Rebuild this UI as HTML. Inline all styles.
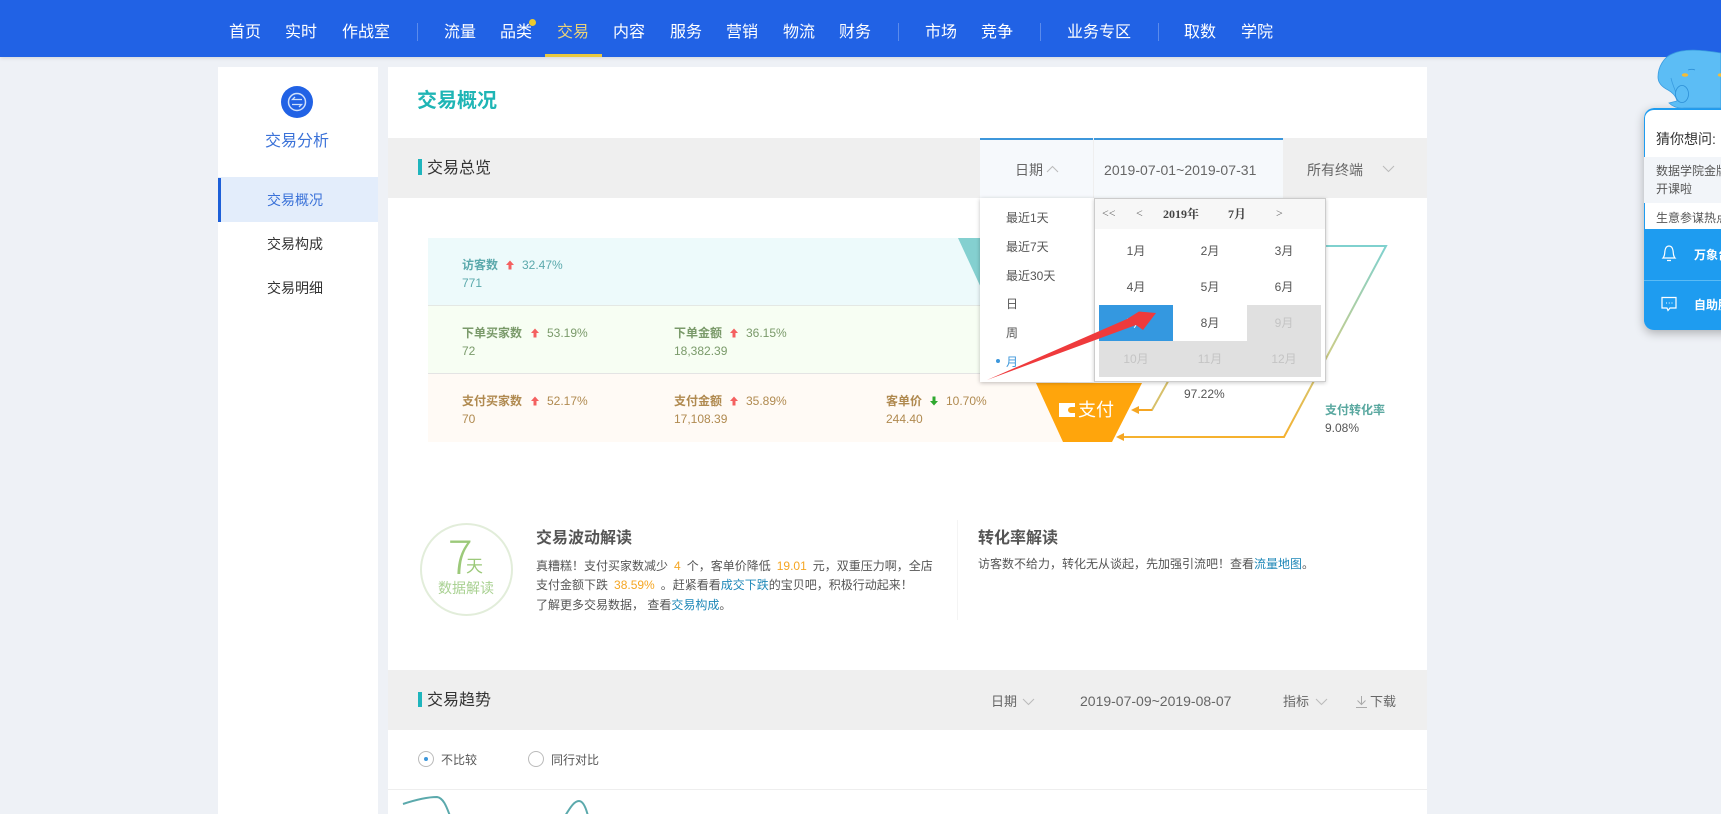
<!DOCTYPE html>
<html lang="zh-CN">
<head>
<meta charset="utf-8">
<title>交易概况</title>
<style>
html,body{margin:0;padding:0;width:1721px;height:814px;overflow:hidden;background:#eef1f6}
body{position:relative;font-family:"Liberation Sans","Noto Sans CJK SC",sans-serif;font-size:12px;color:#555}
.a,.t{position:absolute}
.t{line-height:20px;white-space:nowrap}
.nav{font-size:16px;color:#fff;top:23px}
.div{position:absolute;top:23px;width:1px;height:18px;background:#5b8bec}
.g{color:#666;font-size:14px}
.b{font-weight:bold}
.o{color:#f5a623;margin:0 6px}
.l{color:#1f88b8}
.cell{position:absolute;width:74px;height:36px;line-height:36px;text-align:center;font-size:12px;color:#555}
.off{background:#e0e0e0;color:#c4c4c4}
.r1{color:#5ba9ac}.r2{color:#7a9a6a}.r3{color:#b08a50}
</style>
</head>
<body>

<!-- header -->
<div class="a" style="left:0;top:0;width:1721px;height:57px;background:#2162e5;box-shadow:0 1px 4px rgba(0,0,0,.12)"></div>
<div class="t nav" style="left:229px">首页</div>
<div class="t nav" style="left:285px">实时</div>
<div class="t nav" style="left:342px">作战室</div>
<div class="div" style="left:417px"></div>
<div class="t nav" style="left:444px">流量</div>
<div class="t nav" style="left:500px">品类</div>
<div class="a" style="left:529px;top:19px;width:7px;height:7px;border-radius:50%;background:#ecc92e"></div>
<div class="t nav" style="left:557px;color:#e9d27a">交易</div>
<div class="a" style="left:545px;top:54px;width:57px;height:3px;background:#e8c83f"></div>
<div class="t nav" style="left:613px">内容</div>
<div class="t nav" style="left:670px">服务</div>
<div class="t nav" style="left:726px">营销</div>
<div class="t nav" style="left:783px">物流</div>
<div class="t nav" style="left:839px">财务</div>
<div class="div" style="left:898px"></div>
<div class="t nav" style="left:925px">市场</div>
<div class="t nav" style="left:981px">竞争</div>
<div class="div" style="left:1040px"></div>
<div class="t nav" style="left:1067px">业务专区</div>
<div class="div" style="left:1158px"></div>
<div class="t nav" style="left:1184px">取数</div>
<div class="t nav" style="left:1241px">学院</div>

<!-- sidebar -->
<div class="a" style="left:218px;top:67px;width:160px;height:747px;background:#fff"></div>
<svg class="a" style="left:281px;top:86px" width="32" height="32" viewBox="0 0 32 32">
  <circle cx="16" cy="16" r="16" fill="#2162e5"/>
  <circle cx="16" cy="16" r="8.5" fill="none" stroke="#cfe0fb" stroke-width="1.5"/>
  <path d="M21 13.5H11.5L14 11M11 18.5H20.5L18 21" fill="none" stroke="#cfe0fb" stroke-width="1.3"/>
</svg>
<div class="t" style="left:265px;top:132px;font-size:16px;color:#3b72d8">交易分析</div>
<div class="a" style="left:218px;top:177px;width:160px;height:45px;background:#e3edfb"></div>
<div class="a" style="left:218px;top:178px;width:3px;height:44px;background:#1d5fd8"></div>
<div class="t" style="left:267px;top:190px;font-size:14px;color:#3b72d8">交易概况</div>
<div class="t" style="left:267px;top:234px;font-size:14px;color:#333">交易构成</div>
<div class="t" style="left:267px;top:278px;font-size:14px;color:#333">交易明细</div>

<!-- main -->
<div class="a" style="left:388px;top:67px;width:1039px;height:747px;background:#fff"></div>
<div class="t b" style="left:417px;top:91px;font-size:20px;color:#1fb5b5">交易概况</div>

<div class="a" style="left:388px;top:138px;width:1039px;height:60px;background:#efefef"></div>
<div class="a" style="left:418px;top:159px;width:4px;height:16px;background:#1fb5bd"></div>
<div class="t" style="left:427px;top:159px;font-size:16px;color:#333">交易总览</div>

<!-- funnel rows -->
<div class="a" style="left:428px;top:238px;width:640px;height:67px;background:#edfafb"></div>
<div class="a" style="left:428px;top:305px;width:640px;height:68px;background:#f7fef3;border-top:1px solid #e4e8e4;box-sizing:border-box"></div>
<div class="a" style="left:428px;top:373px;width:640px;height:69px;background:#fffaf5;border-top:1px solid #e4e4e4;box-sizing:border-box"></div>

<svg class="a" style="left:0;top:0" width="1721" height="814" viewBox="0 0 1721 814">
  <defs>
    <linearGradient id="lg" x1="0" y1="0" x2="0" y2="1">
      <stop offset="0" stop-color="#7fd1cf"/>
      <stop offset=".55" stop-color="#c9cd8a"/>
      <stop offset="1" stop-color="#f5b12f"/>
    </linearGradient>
  </defs>
  <polygon points="958,238 1100,238 1060,305 989,305" fill="#84d0d0"/>
  <polygon points="1036,383 1142,383 1112,442 1063,442" fill="#ffa50c"/>
  <polyline points="1300,246 1386,246 1284,437 1124,437" fill="none" stroke="url(#lg)" stroke-width="2"/>
  <path d="M1284,437H1124" stroke="#f5b12f" stroke-width="2"/>
  <polygon points="1116,437 1124,433 1124,441" fill="#f5a623"/>
  <polyline points="1180,360 1152,410 1139,410" fill="none" stroke="#d7c06a" stroke-width="2"/>
  <path d="M1152,410H1139" stroke="#f5a623" stroke-width="2"/>
  <polygon points="1131,410 1139,406 1139,414" fill="#f5a623"/>
  <path d="M1059 403h16v4h-4a3 3 0 0 0 0 6h4v4h-16z" fill="#fff"/>
  <!-- small trend arrows -->
  <g fill="#f46060">
    <path d="M510 260.500L514 265H511.500V269.500H508.500V265H506Z"/>
    <path d="M535 328.500L539 333H536.500V337.500H533.500V333H531Z"/>
    <path d="M734 328.500L738 333H735.500V337.500H732.500V333H730Z"/>
    <path d="M535 396.500L539 401H536.500V405.500H533.500V401H531Z"/>
    <path d="M734 396.500L738 401H735.500V405.500H732.500V401H730Z"/>
  </g>
  <path d="M934 405.500L938 401H935.500V396.500H932.500V401H930Z" fill="#2fa82f"/>
</svg>
<div class="t" style="left:1078px;top:400px;font-size:18px;color:#fff">支付</div>
<div class="t" style="left:1184px;top:384px;color:#555">97.22%</div>
<div class="t b" style="left:1325px;top:400px;color:#5aa8a0">支付转化率</div>
<div class="t" style="left:1325px;top:418px;color:#555">9.08%</div>

<!-- row 1 -->
<div class="t b r1" style="left:462px;top:255px">访客数</div>
<div class="t r1" style="left:522px;top:255px">32.47%</div>
<div class="t r1" style="left:462px;top:273px">771</div>
<!-- row 2 -->
<div class="t b r2" style="left:462px;top:323px">下单买家数</div>
<div class="t r2" style="left:547px;top:323px">53.19%</div>
<div class="t r2" style="left:462px;top:341px">72</div>
<div class="t b r2" style="left:674px;top:323px">下单金额</div>
<div class="t r2" style="left:746px;top:323px">36.15%</div>
<div class="t r2" style="left:674px;top:341px">18,382.39</div>
<!-- row 3 -->
<div class="t b r3" style="left:462px;top:391px">支付买家数</div>
<div class="t r3" style="left:547px;top:391px">52.17%</div>
<div class="t r3" style="left:462px;top:409px">70</div>
<div class="t b r3" style="left:674px;top:391px">支付金额</div>
<div class="t r3" style="left:746px;top:391px">35.89%</div>
<div class="t r3" style="left:674px;top:409px">17,108.39</div>
<div class="t b r3" style="left:886px;top:391px">客单价</div>
<div class="t r3" style="left:946px;top:391px">10.70%</div>
<div class="t r3" style="left:886px;top:409px">244.40</div>

<!-- right tabs -->
<div class="a" style="left:980px;top:138px;width:113px;height:60px;background:#f6f9fc;border-top:2px solid #3d97db;box-sizing:border-box"></div>
<div class="a" style="left:1094px;top:138px;width:189px;height:60px;background:#f6f9fc;border-top:2px solid #3d97db;box-sizing:border-box"></div>
<div class="t g" style="left:1015px;top:160px">日期</div>
<svg class="a" style="left:1046px;top:165px" width="13" height="8"><path d="M1 7L6.500 1.500L12 7" fill="none" stroke="#bbb"/></svg>
<div class="t g" style="left:1104px;top:160px;letter-spacing:.05px">2019-07-01~2019-07-31</div>
<div class="t g" style="left:1307px;top:160px">所有终端</div>
<svg class="a" style="left:1382px;top:165px" width="13" height="8"><path d="M1 1L6.500 6.500L12 1" fill="none" stroke="#bbb"/></svg>

<!-- dropdown -->
<div class="a" style="left:980px;top:198px;width:114px;height:184px;background:#fff;box-shadow:0 1px 4px rgba(0,0,0,.25)"></div>
<div class="t" style="left:1006px;top:208px">最近1天</div>
<div class="t" style="left:1006px;top:237px">最近7天</div>
<div class="t" style="left:1006px;top:266px">最近30天</div>
<div class="t" style="left:1006px;top:294px">日</div>
<div class="t" style="left:1006px;top:323px">周</div>
<div class="t" style="left:1006px;top:352px;color:#3d97db">月</div>
<div class="a" style="left:996px;top:359px;width:4px;height:4px;border-radius:50%;background:#3d97db"></div>

<!-- calendar -->
<div class="a" style="left:1094px;top:198px;width:232px;height:184px;background:#fff;border:1px solid #ccc;box-sizing:border-box;box-shadow:0 1px 4px rgba(0,0,0,.2)"></div>
<div class="a" style="left:1095px;top:199px;width:230px;height:30px;background:#f7f7f7"></div>
<div class="t" style="left:1102px;top:203px;color:#666;font-family:'Liberation Serif','Noto Serif CJK SC',serif">&lt;&lt;</div>
<div class="t" style="left:1136px;top:203px;color:#666;font-family:'Liberation Serif','Noto Serif CJK SC',serif">&lt;</div>
<div class="t b" style="left:1163px;top:204px;color:#444;font-family:'Liberation Serif','Noto Serif CJK SC',serif">2019年</div>
<div class="t b" style="left:1228px;top:204px;color:#444;font-family:'Liberation Serif','Noto Serif CJK SC',serif">7月</div>
<div class="t" style="left:1276px;top:203px;color:#666;font-family:'Liberation Serif','Noto Serif CJK SC',serif">&gt;</div>
<div class="cell" style="left:1099px;top:233px">1月</div>
<div class="cell" style="left:1173px;top:233px">2月</div>
<div class="cell" style="left:1247px;top:233px">3月</div>
<div class="cell" style="left:1099px;top:269px">4月</div>
<div class="cell" style="left:1173px;top:269px">5月</div>
<div class="cell" style="left:1247px;top:269px">6月</div>
<div class="cell" style="left:1099px;top:305px;background:#3498e0;color:#fff">7月</div>
<div class="cell" style="left:1173px;top:305px">8月</div>
<div class="cell off" style="left:1247px;top:305px">9月</div>
<div class="cell off" style="left:1099px;top:341px">10月</div>
<div class="cell off" style="left:1173px;top:341px">11月</div>
<div class="cell off" style="left:1247px;top:341px">12月</div>

<!-- red arrow -->
<svg class="a" style="left:0;top:0" width="1721" height="814" viewBox="0 0 1721 814">
  <polygon points="987,380 1127,319 1139,311.500 1156,313 1143,330 1136,325" fill="#ef3a3c"/>
</svg>

<!-- interpretation -->
<div class="a" style="left:420px;top:523px;width:93px;height:93px;border:2px solid #e2edda;border-radius:50%;box-sizing:border-box"></div>
<div class="t" style="left:448px;top:545px;font-size:46px;color:#9cc97a;font-weight:200;font-family:'Noto Sans CJK SC',sans-serif">7</div>
<div class="t" style="left:466px;top:557px;font-size:17px;color:#9cc97a">天</div>
<div class="t" style="left:438px;top:578px;font-size:14px;color:#a9d192">数据解读</div>

<div class="t b" style="left:536px;top:529px;font-size:16px;color:#555">交易波动解读</div>
<div class="t" style="left:536px;top:556px">真糟糕！支付买家数减少<span class="o">4</span>个，客单价降低<span class="o">19.01</span>元，双重压力啊，全店</div>
<div class="t" style="left:536px;top:575px">支付金额下跌<span class="o">38.59%</span>。赶紧看看<span class="l">成交下跌</span>的宝贝吧，积极行动起来！</div>
<div class="t" style="left:536px;top:595px">了解更多交易数据， 查看<span class="l">交易构成</span>。</div>
<div class="a" style="left:957px;top:520px;width:1px;height:100px;background:#f4f4f4"></div>
<div class="t b" style="left:978px;top:529px;font-size:16px;color:#555">转化率解读</div>
<div class="t" style="left:978px;top:554px">访客数不给力，转化无从谈起，先加强引流吧！查看<span class="l">流量地图</span>。</div>

<!-- trend -->
<div class="a" style="left:388px;top:670px;width:1039px;height:60px;background:#efefef"></div>
<div class="a" style="left:418px;top:692px;width:4px;height:15px;background:#1fb5bd"></div>
<div class="t" style="left:427px;top:691px;font-size:16px;color:#333">交易趋势</div>
<div class="t" style="left:991px;top:692px;font-size:13px;color:#666">日期</div>
<svg class="a" style="left:1022px;top:698px" width="13" height="8"><path d="M1 1L6.500 6.500L12 1" fill="none" stroke="#bbb"/></svg>
<div class="t g" style="left:1080px;top:691px">2019-07-09~2019-08-07</div>
<div class="t" style="left:1283px;top:692px;font-size:13px;color:#666">指标</div>
<svg class="a" style="left:1315px;top:698px" width="13" height="8"><path d="M1 1L6.500 6.500L12 1" fill="none" stroke="#bbb"/></svg>
<svg class="a" style="left:1355px;top:695px" width="13" height="14"><path d="M6.500 1V9M2.500 5.500L6.500 9.500L10.500 5.500M1 12.500H12" fill="none" stroke="#aaa"/></svg>
<div class="t" style="left:1370px;top:692px;font-size:13px;color:#666">下载</div>
<div class="a" style="left:418px;top:751px;width:16px;height:16px;border:1px solid #bbb;border-radius:50%;box-sizing:border-box"></div>
<div class="a" style="left:424px;top:757px;width:4px;height:4px;border-radius:50%;background:#3d97db"></div>
<div class="t" style="left:441px;top:750px">不比较</div>
<div class="a" style="left:528px;top:751px;width:16px;height:16px;border:1px solid #bbb;border-radius:50%;box-sizing:border-box"></div>
<div class="t" style="left:551px;top:750px">同行对比</div>
<div class="a" style="left:388px;top:789px;width:1039px;height:1px;background:#eee"></div>
<svg class="a" style="left:0;top:0" width="1721" height="814" viewBox="0 0 1721 814">
  <path d="M403,804C415,800 428,797 437,797C443,798 446,805 450,816" fill="none" stroke="#5ba9ac" stroke-width="2"/>
  <path d="M565,816C570,808 574,801 579,801C583,801 586,808 588,816" fill="none" stroke="#5ba9ac" stroke-width="2"/>
</svg>

<!-- right widget -->
<div class="a" style="left:1644px;top:108px;width:120px;height:222px;background:#fff;border-radius:10px;overflow:hidden;box-shadow:0 3px 10px rgba(0,0,0,.28)">
  <div class="a" style="left:0;top:0;width:120px;height:222px;border-top:2px solid #1e9cf0;border-left:1px solid #1e9cf0;border-radius:10px;box-sizing:border-box"></div>
  <div class="t" style="left:12px;top:21px;font-size:14px;color:#333">猜你想问:</div>
  <div class="a" style="left:0;top:49px;width:120px;height:46px;background:#f2f5f9"></div>
  <div class="t" style="left:12px;top:53px;color:#555">数据学院金牌</div>
  <div class="t" style="left:12px;top:71px;color:#555">开课啦</div>
  <div class="t" style="left:12px;top:100px;color:#555">生意参谋热点</div>
  <div class="a" style="left:0;top:121px;width:120px;height:101px;background:#1e9cf0"></div>
  <div class="a" style="left:0;top:172px;width:120px;height:1px;background:#5abbf5"></div>
  <div class="t b" style="left:50px;top:137px;color:#fff">万象台</div>
  <div class="t b" style="left:50px;top:187px;color:#fff">自助服务</div>
</div>
<svg class="a" style="left:1661px;top:244px" width="16" height="18" viewBox="0 0 16 18"><path d="M2 14C4 12 3.500 9 4 6.500C4.500 3.500 6 2 8 2C10 2 11.500 3.500 12 6.500C12.500 9 12 12 14 14ZM6 16.500H10" fill="none" stroke="#fff" stroke-width="1.200"/></svg>
<svg class="a" style="left:1661px;top:296px" width="16" height="16" viewBox="0 0 16 16"><path d="M1 1.500H15V12H9L7 14.500L6 12H1Z" fill="none" stroke="#fff" stroke-width="1.200"/><path d="M5 7H5.800M7.800 7H8.600M10.600 7H11.400" stroke="#fff" stroke-width="1.200"/></svg>

<!-- mascot -->
<svg class="a" style="left:1650px;top:45px" width="71" height="70" viewBox="0 0 71 70">
  <path d="M8 32C8 22 14 12 22 9C34 3 52 5 71 8V63H34C28 64 22 61 19 58L27 56C26 51 22 47 18 45C12 42 8 38 8 32Z" fill="#5cbdf5" stroke="#3a9ce0" stroke-width=".8"/>
  <path d="M21 33C22 38 24 42 26 48" fill="none" stroke="#3a9ce0" stroke-width=".8"/>
  <ellipse cx="32" cy="49" rx="6.500" ry="8.500" fill="#5cbdf5" stroke="#2d8fd6" stroke-width=".8"/>
  <ellipse cx="35" cy="30" rx="3.200" ry="1.800" fill="#f5bc35"/>
  <ellipse cx="71" cy="30" rx="3.200" ry="1.800" fill="#f5bc35"/>
  <path d="M38 25C41 24 43 24 45 25" fill="none" stroke="#2d8fd6" stroke-width=".8"/>
</svg>

</body>
</html>
